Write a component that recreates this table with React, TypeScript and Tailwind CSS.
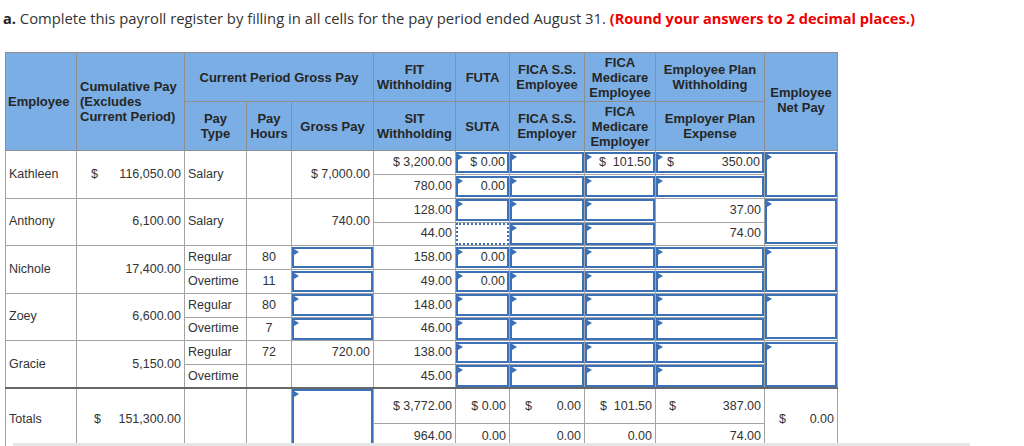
import React from "react";

const cellBase = "border border-[#a3a3a3] px-[3px] align-middle whitespace-nowrap";
const thBase = "border border-[#8f8f8f] bg-[#7aaee4] font-bold text-[#262626] text-[13px] leading-[15px] text-center align-middle";

type PProps = { children?: React.ReactNode; rowSpan?: number; className?: string };

function P({ children, rowSpan, className = "text-right" }: PProps) {
  return (
    <td rowSpan={rowSpan} className={`${cellBase} ${className}`}>
      {children}
    </td>
  );
}

type IProps = {
  children?: React.ReactNode;
  rowSpan?: number;
  tall?: boolean;
  dotted?: boolean;
  tri?: boolean;
  between?: boolean;
};

function I({ children, rowSpan, tall, dotted, tri = true, between }: IProps) {
  return (
    <td rowSpan={rowSpan} className="border border-[#a3a3a3] p-0 align-middle whitespace-nowrap">
      <div
        className={`relative flex items-center border-2 border-[#3c71b8] pr-[2px] ${
          dotted ? "border-dotted" : "border-solid"
        } ${tall ? "h-[45px]" : "h-[21.5px]"} ${between ? "justify-between" : "justify-end"}`}
      >
        {tri && (
          <span className="absolute left-0 top-0 h-0 w-0 border-y-[3px] border-l-[5px] border-y-transparent border-l-[#3c71b8]" />
        )}
        {children}
      </div>
    </td>
  );
}

function D({ pl, v }: { pl: string; v: string }) {
  return (
    <div className="flex justify-between">
      <span className={pl}>$</span>
      <span>{v}</span>
    </div>
  );
}

export default function App() {
  const r1 = "h-[24px]";
  const r2 = "h-[23.5px]";
  return (
    <div className="relative h-[446px] w-[1024px] overflow-hidden bg-white">
      <div
        className="h-[28px] overflow-hidden whitespace-nowrap pl-[3px] pt-[8px] leading-[20px] text-[#333]"
        style={{ fontFamily: "'Open Sans', sans-serif" }}
      >
        <span className="text-[14.6px] font-bold text-[#222]">a.</span>
        <span className="text-[14.8px]">
          {" "}Complete this payroll register by filling in all cells for the pay period ended August 31.{" "}
        </span>
        <span className="text-[14.6px] font-bold text-[#ee0000]">(Round your answers to 2 decimal places.)</span>
      </div>

      <table
        className="ml-[5px] mt-[24px] w-[832px] table-fixed border-collapse text-[12.5px] text-[#333]"
        style={{ fontFamily: "'Liberation Sans', Arial, sans-serif" }}
      >
        <colgroup>
          <col className="w-[71px]" />
          <col className="w-[108px]" />
          <col className="w-[62px]" />
          <col className="w-[45px]" />
          <col className="w-[82px]" />
          <col className="w-[82px]" />
          <col className="w-[54px]" />
          <col className="w-[75px]" />
          <col className="w-[71px]" />
          <col className="w-[109px]" />
          <col className="w-[73px]" />
        </colgroup>
        <thead>
          <tr className="h-[49px]">
            <th rowSpan={2} className={`${thBase} !text-left pl-[2px]`}>Employee</th>
            <th rowSpan={2} className={`${thBase} !text-left pl-[3px]`}>
              Cumulative Pay
              <br />
              (Excludes
              <br />
              Current Period)
            </th>
            <th colSpan={3} className={thBase}>Current Period Gross Pay</th>
            <th className={thBase}>
              FIT
              <br />
              Withholding
            </th>
            <th className={thBase}>FUTA</th>
            <th className={thBase}>
              FICA S.S.
              <br />
              Employee
            </th>
            <th className={thBase}>
              FICA
              <br />
              Medicare
              <br />
              Employee
            </th>
            <th className={thBase}>
              Employee Plan
              <br />
              Withholding
            </th>
            <th rowSpan={2} className={`${thBase} pb-[4px]`}>
              Employee
              <br />
              Net Pay
            </th>
          </tr>
          <tr className="h-[49px]">
            <th className={thBase}>
              Pay
              <br />
              Type
            </th>
            <th className={thBase}>
              Pay
              <br />
              Hours
            </th>
            <th className={thBase}>Gross Pay</th>
            <th className={thBase}>
              SIT
              <br />
              Withholding
            </th>
            <th className={thBase}>SUTA</th>
            <th className={thBase}>
              FICA S.S.
              <br />
              Employer
            </th>
            <th className={thBase}>
              FICA
              <br />
              Medicare
              <br />
              Employer
            </th>
            <th className={thBase}>
              Employer Plan
              <br />
              Expense
            </th>
          </tr>
        </thead>
        <tbody>
          {/* Kathleen */}
          <tr className={r1}>
            <P rowSpan={2} className="text-left">Kathleen</P>
            <P rowSpan={2}>
              <D pl="pl-[11px]" v="116,050.00" />
            </P>
            <P rowSpan={2} className="text-left">Salary</P>
            <P rowSpan={2} />
            <P rowSpan={2}>$ 7,000.00</P>
            <P>$ 3,200.00</P>
            <I>$ 0.00</I>
            <I />
            <I>$&nbsp;&nbsp;101.50</I>
            <I between>
              <span className="pl-[9px]">$</span>
              <span>350.00</span>
            </I>
            <I rowSpan={2} tall />
          </tr>
          <tr className={r2}>
            <P>780.00</P>
            <I>0.00</I>
            <I />
            <I />
            <I />
          </tr>

          {/* Anthony */}
          <tr className={r1}>
            <P rowSpan={2} className="text-left">Anthony</P>
            <P rowSpan={2}>6,100.00</P>
            <P rowSpan={2} className="text-left">Salary</P>
            <P rowSpan={2} />
            <P rowSpan={2}>740.00</P>
            <P>128.00</P>
            <I />
            <I />
            <I />
            <P>37.00</P>
            <I rowSpan={2} tall />
          </tr>
          <tr className={r2}>
            <P>44.00</P>
            <I dotted tri={false} />
            <I />
            <I />
            <P>74.00</P>
          </tr>

          {/* Nichole */}
          <tr className={r1}>
            <P rowSpan={2} className="text-left">Nichole</P>
            <P rowSpan={2}>17,400.00</P>
            <P className="text-left">Regular</P>
            <P className="text-center">80</P>
            <I />
            <P>158.00</P>
            <I>0.00</I>
            <I />
            <I />
            <I />
            <I rowSpan={2} tall />
          </tr>
          <tr className={r2}>
            <P className="text-left">Overtime</P>
            <P className="text-center">11</P>
            <I />
            <P>49.00</P>
            <I>0.00</I>
            <I />
            <I />
            <I />
          </tr>

          {/* Zoey */}
          <tr className={r1}>
            <P rowSpan={2} className="text-left">Zoey</P>
            <P rowSpan={2}>6,600.00</P>
            <P className="text-left">Regular</P>
            <P className="text-center">80</P>
            <I />
            <P>148.00</P>
            <I />
            <I />
            <I />
            <I />
            <I rowSpan={2} tall />
          </tr>
          <tr className={r2}>
            <P className="text-left">Overtime</P>
            <P className="text-center">7</P>
            <I />
            <P>46.00</P>
            <I />
            <I />
            <I />
            <I />
          </tr>

          {/* Gracie */}
          <tr className={r1}>
            <P rowSpan={2} className="text-left">Gracie</P>
            <P rowSpan={2}>5,150.00</P>
            <P className="text-left">Regular</P>
            <P className="text-center">72</P>
            <P>720.00</P>
            <P>138.00</P>
            <I />
            <I />
            <I />
            <I />
            <I rowSpan={2} tall />
          </tr>
          <tr className={r2}>
            <P className="text-left">Overtime</P>
            <P className="text-center" />
            <P />
            <P>45.00</P>
            <I />
            <I />
            <I />
            <I />
          </tr>

          {/* Totals */}
          <tr className="h-[33px] [&>td]:border-t-2 [&>td]:border-t-[#666]">
            <P rowSpan={2} className="text-left">Totals</P>
            <P rowSpan={2}>
              <D pl="pl-[14px]" v="151,300.00" />
            </P>
            <P rowSpan={2} />
            <P rowSpan={2} />
            <td rowSpan={2} className="border border-[#a3a3a3] p-0 align-top">
              <div className="relative h-[60px] border-2 border-[#3c71b8]">
                <span className="absolute left-0 top-0 h-0 w-0 border-y-[3px] border-l-[5px] border-y-transparent border-l-[#3c71b8]" />
              </div>
            </td>
            <P>$ 3,772.00</P>
            <P>$ 0.00</P>
            <P>
              <D pl="pl-[12px]" v="0.00" />
            </P>
            <P>$&nbsp;&nbsp;101.50</P>
            <P>
              <D pl="pl-[10px]" v="387.00" />
            </P>
            <P rowSpan={2}>
              <D pl="pl-[11px]" v="0.00" />
            </P>
          </tr>
          <tr className="h-[24px]">
            <P>964.00</P>
            <P>0.00</P>
            <P>0.00</P>
            <P>0.00</P>
            <P>74.00</P>
          </tr>
        </tbody>
      </table>

      <div className="absolute bottom-0 left-[13px] h-[3px] w-[957px] bg-[#e6e6e6]" />
    </div>
  );
}
